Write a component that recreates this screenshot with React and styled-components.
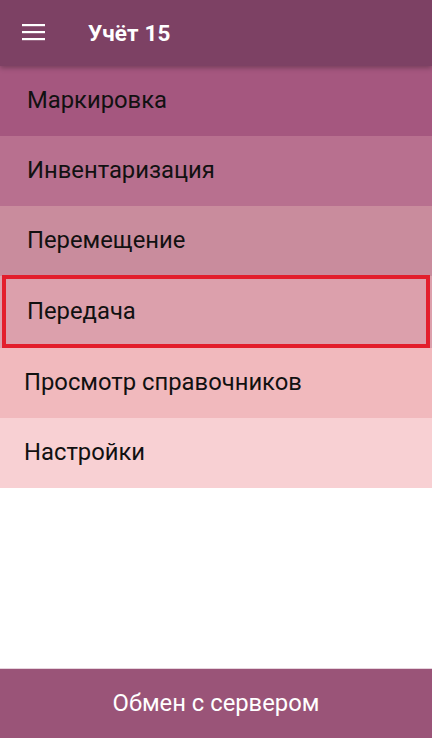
import React from "react";
import styled, { createGlobalStyle } from "styled-components";

const items = [
  { title: "Маркировка", bg: "#a5577f", pad: 27 },
  { title: "Инвентаризация", bg: "#b8708f", pad: 27 },
  { title: "Перемещение", bg: "#c98c9d", pad: 27 },
  { title: "Передача", bg: "#dca0ac", pad: 27, marked: true },
  { title: "Просмотр справочников", bg: "#f1b9bd", pad: 24 },
  { title: "Настройки", bg: "#f8d0d3", pad: 24 },
];

const App = () => {
  return (
    <>
      <GlobalStyle />
      <Screen>
        <Header>
          <MenuButton aria-label="menu">
            <svg width="23" height="18" viewBox="0 0 23 18">
              <rect x="0" y="1" width="23" height="2.2" fill="#fff" />
              <rect x="0" y="8" width="23" height="2.2" fill="#fff" />
              <rect x="0" y="15" width="23" height="2.2" fill="#fff" />
            </svg>
          </MenuButton>
          <Title>Учёт 15</Title>
        </Header>
        <MenuList>
          {items.map((item) => (
            <MenuItem key={item.title} $bg={item.bg} $pad={item.pad} $marked={item.marked}>
              {item.title}
            </MenuItem>
          ))}
        </MenuList>
        <Spacer />
        <ExchangeButton>Обмен с сервером</ExchangeButton>
      </Screen>
    </>
  );
};

export default App;

const GlobalStyle = createGlobalStyle`
  html, body {
    margin: 0;
    padding: 0;
    background: #ffffff;
  }
  body {
    font-family: Roboto, "Noto Sans", "Liberation Sans", sans-serif;
  }
`;

const Screen = styled.div`
  width: 432px;
  height: 738px;
  display: flex;
  flex-direction: column;
  background: #ffffff;
  overflow: hidden;
`;

const Header = styled.div`
  height: 66px;
  flex-shrink: 0;
  display: flex;
  align-items: center;
  background: #7d4164;
  box-shadow: 0 2px 5px rgba(0, 0, 0, 0.28);
  position: relative;
  z-index: 2;
`;

const MenuButton = styled.div`
  width: 23px;
  height: 18px;
  margin-left: 22px;
  margin-top: -2px;
  display: flex;
`;

const Title = styled.div`
  margin-left: 43px;
  margin-top: -1px;
  color: #ffffff;
  font-size: 22.5px;
  font-weight: 700;
  letter-spacing: 0.2px;
`;

const MenuList = styled.div`
  display: flex;
  flex-direction: column;
`;

const MenuItem = styled.div`
  position: relative;
  height: 70px;
  display: flex;
  align-items: center;
  padding-left: ${(p) => p.$pad}px;
  padding-bottom: 3px;
  box-sizing: border-box;
  background: ${(p) => p.$bg};
  color: #111111;
  font-size: 23.8px;
  font-weight: 400;

  ${(p) =>
    p.$marked &&
    `
    height: 72px;
    &::after {
      content: "";
      position: absolute;
      top: -1px;
      bottom: 0px;
      left: 2px;
      right: 2px;
      border: 4px solid #e31e2c;
    }
  `}
`;

const Spacer = styled.div`
  flex: 1;
`;

const ExchangeButton = styled.div`
  height: 70px;
  flex-shrink: 0;
  display: flex;
  align-items: center;
  justify-content: center;
  padding-bottom: 2px;
  box-sizing: border-box;
  background: #9a5478;
  color: #ffffff;
  font-size: 23.8px;
  font-weight: 400;
  border-top: 1px solid #e6d3dd;
`;
